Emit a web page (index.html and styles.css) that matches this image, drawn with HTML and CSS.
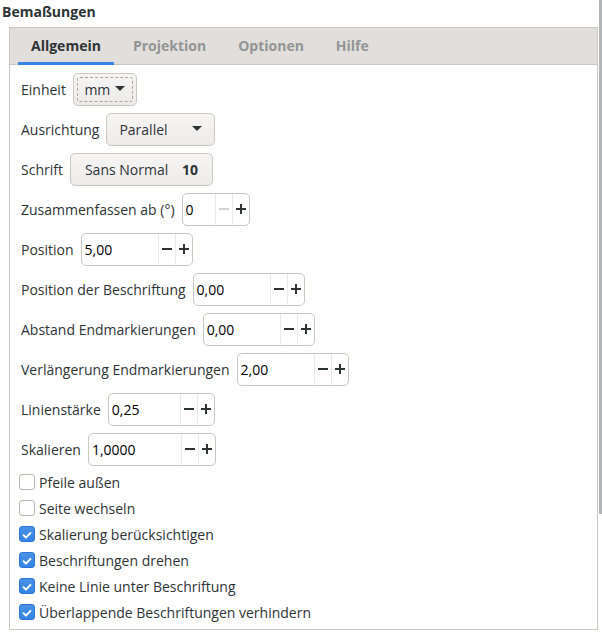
FILE: index.html
```html
<!DOCTYPE html>
<html lang="de">
<head>
<meta charset="utf-8">
<title>Bemaßungen</title>
<link rel="stylesheet" href="styles.css">
</head>
<body>
<div class="page">
  <div class="title">Bemaßungen</div>
  <div class="panel">
    <div class="tabs">
      <div class="tab active">Allgemein</div>
      <div class="tab">Projektion</div>
      <div class="tab">Optionen</div>
      <div class="tab">Hilfe</div>
    </div>
    <div class="content">
      <div class="row">
        <span class="label">Einheit</span>
        <div class="btn combo unit"><span class="focus">mm <span class="arrow"></span></span></div>
      </div>
      <div class="row">
        <span class="label">Ausrichtung</span>
        <div class="btn combo orient"><span>Parallel</span><span class="arrow"></span></div>
      </div>
      <div class="row">
        <span class="label">Schrift</span>
        <div class="btn font"><span>Sans Normal</span><b>10</b></div>
      </div>
      <div class="row">
        <span class="label">Zusammenfassen ab (°)</span>
        <div class="spin"><span class="entry w33">0</span><span class="sbtn dis"><svg viewBox="0 0 10 10" width="10" height="10"><path d="M0 5H10" stroke="currentColor" stroke-width="2"/></svg></span><span class="sbtn"><svg viewBox="0 0 10 10" width="10" height="10"><path d="M0 5H10M5 0V10" stroke="currentColor" stroke-width="2"/></svg></span></div>
      </div>
      <div class="row">
        <span class="label">Position</span>
        <div class="spin"><span class="entry w77">5,00</span><span class="sbtn"><svg viewBox="0 0 10 10" width="10" height="10"><path d="M0 5H10" stroke="currentColor" stroke-width="2"/></svg></span><span class="sbtn"><svg viewBox="0 0 10 10" width="10" height="10"><path d="M0 5H10M5 0V10" stroke="currentColor" stroke-width="2"/></svg></span></div>
      </div>
      <div class="row">
        <span class="label">Position der Beschriftung</span>
        <div class="spin"><span class="entry w77">0,00</span><span class="sbtn"><svg viewBox="0 0 10 10" width="10" height="10"><path d="M0 5H10" stroke="currentColor" stroke-width="2"/></svg></span><span class="sbtn"><svg viewBox="0 0 10 10" width="10" height="10"><path d="M0 5H10M5 0V10" stroke="currentColor" stroke-width="2"/></svg></span></div>
      </div>
      <div class="row">
        <span class="label">Abstand Endmarkierungen</span>
        <div class="spin"><span class="entry w77">0,00</span><span class="sbtn"><svg viewBox="0 0 10 10" width="10" height="10"><path d="M0 5H10" stroke="currentColor" stroke-width="2"/></svg></span><span class="sbtn"><svg viewBox="0 0 10 10" width="10" height="10"><path d="M0 5H10M5 0V10" stroke="currentColor" stroke-width="2"/></svg></span></div>
      </div>
      <div class="row">
        <span class="label">Verlängerung Endmarkierungen</span>
        <div class="spin"><span class="entry w77">2,00</span><span class="sbtn"><svg viewBox="0 0 10 10" width="10" height="10"><path d="M0 5H10" stroke="currentColor" stroke-width="2"/></svg></span><span class="sbtn"><svg viewBox="0 0 10 10" width="10" height="10"><path d="M0 5H10M5 0V10" stroke="currentColor" stroke-width="2"/></svg></span></div>
      </div>
      <div class="row">
        <span class="label">Linienstärke</span>
        <div class="spin"><span class="entry w72">0,25</span><span class="sbtn"><svg viewBox="0 0 10 10" width="10" height="10"><path d="M0 5H10" stroke="currentColor" stroke-width="2"/></svg></span><span class="sbtn"><svg viewBox="0 0 10 10" width="10" height="10"><path d="M0 5H10M5 0V10" stroke="currentColor" stroke-width="2"/></svg></span></div>
      </div>
      <div class="row">
        <span class="label">Skalieren</span>
        <div class="spin"><span class="entry w93">1,0000</span><span class="sbtn"><svg viewBox="0 0 10 10" width="10" height="10"><path d="M0 5H10" stroke="currentColor" stroke-width="2"/></svg></span><span class="sbtn"><svg viewBox="0 0 10 10" width="10" height="10"><path d="M0 5H10M5 0V10" stroke="currentColor" stroke-width="2"/></svg></span></div>
      </div>
      <div class="checks">
        <label class="check"><span class="box"></span>Pfeile außen</label>
        <label class="check"><span class="box"></span>Seite wechseln</label>
        <label class="check"><span class="box on"><svg viewBox="0 0 16 16" width="16" height="16"><path d="M4 8.2 L6.8 11 L12 5.6" fill="none" stroke="#fff" stroke-width="2.2" stroke-linecap="round" stroke-linejoin="round"/></svg></span>Skalierung berücksichtigen</label>
        <label class="check"><span class="box on"><svg viewBox="0 0 16 16" width="16" height="16"><path d="M4 8.2 L6.8 11 L12 5.6" fill="none" stroke="#fff" stroke-width="2.2" stroke-linecap="round" stroke-linejoin="round"/></svg></span>Beschriftungen drehen</label>
        <label class="check"><span class="box on"><svg viewBox="0 0 16 16" width="16" height="16"><path d="M4 8.2 L6.8 11 L12 5.6" fill="none" stroke="#fff" stroke-width="2.2" stroke-linecap="round" stroke-linejoin="round"/></svg></span>Keine Linie unter Beschriftung</label>
        <label class="check"><span class="box on"><svg viewBox="0 0 16 16" width="16" height="16"><path d="M4 8.2 L6.8 11 L12 5.6" fill="none" stroke="#fff" stroke-width="2.2" stroke-linecap="round" stroke-linejoin="round"/></svg></span>Überlappende Beschriftungen verhindern</label>
      </div>
    </div>
  </div>
  <div class="scrollbar"></div>
</div>
</body>
</html>
```
FILE: styles.css
```css
* { box-sizing: border-box; }
html, body { margin: 0; padding: 0; background: #fff; }
body {
  font-family: "Open Sans", "Noto Sans", sans-serif;
  font-size: 14px;
  color: #2e3436;
}
.page {
  position: relative;
  width: 602px;
  height: 632px;
  padding: 0 4px 0 9px;
}
.title {
  font-weight: bold;
  font-size: 14px;
  height: 27px;
  line-height: 24px;
  margin-left: -7px;
  color: #2e3436;
}
.panel {
  border: 1px solid #cdc7c2;
  height: 603px;
  display: flex;
  flex-direction: column;
}
.tabs {
  display: flex;
  gap: 6px;
  padding-left: 8px;
  height: 37px;
  background: #e1dedb;
  border-bottom: 1px solid #cdc7c2;
}
.tab {
  padding: 0 13px;
  font-weight: bold;
  color: #929595;
  line-height: 36px;
  border-bottom: 3px solid transparent;
  margin-bottom: -1px;
}
.tab.active {
  color: #2e3436;
  border-bottom-color: #3584e4;
}
.content {
  padding: 8px 0 0 11px;
  display: flex;
  flex-direction: column;
  gap: 8px;
}
.row {
  display: flex;
  align-items: center;
  gap: 7px;
  height: 32px;
}
.btn {
  height: 33px;
  border: 1px solid #cdc7c2;
  border-radius: 5px;
  background: linear-gradient(#f6f5f4, #edebe9);
  display: flex;
  align-items: center;
}
.arrow {
  display: inline-block;
  width: 0;
  height: 0;
  border-left: 5px solid transparent;
  border-right: 5px solid transparent;
  border-top: 5px solid #2e3436;
  vertical-align: middle;
  margin-bottom: 2px;
}
.unit { width: 64px; padding: 3px; }
.unit .focus {
  flex: 1;
  height: 100%;
  border: 1px dashed #a8a6a3;
  border-radius: 3px;
  display: flex;
  align-items: center;
  justify-content: center;
  gap: 5px;
}
.orient { width: 109px; padding: 0 12px; justify-content: space-between; }
.font { width: 143px; padding: 0 14px; justify-content: space-between; }
.spin {
  height: 33px;
  border: 1px solid #cdc7c2;
  border-radius: 5px;
  background: #fff;
  display: flex;
}
.entry {
  padding-left: 3px;
  line-height: 31px;
  color: #000;
}
.w33 { width: 32px; }
.w77 { width: 76px; }
.w72 { width: 71px; }
.w93 { width: 92px; }
.sbtn {
  width: 17px;
  border-left: 1px solid #ebe9e7;
  display: flex;
  align-items: center;
  justify-content: center;
  color: #2e3436;
}
.sbtn svg { display: block; }
.sbtn.dis { color: #d3d4d4; }
.checks {
  display: flex;
  flex-direction: column;
  margin-top: -4px;
  margin-left: -2px;
}
.check {
  display: flex;
  align-items: center;
  gap: 4px;
  height: 26px;
}
.box {
  width: 16px;
  height: 16px;
  border: 1px solid #bab5b0;
  border-radius: 3px;
  background: #fff;
  display: flex;
}
.box.on {
  border-color: #2a76d6;
  background: linear-gradient(#4a90e6, #3584e4);
}
.scrollbar {
  position: absolute;
  right: 0;
  top: 0;
  width: 3px;
  height: 514px;
  background: #b2b5b5;
}
```
